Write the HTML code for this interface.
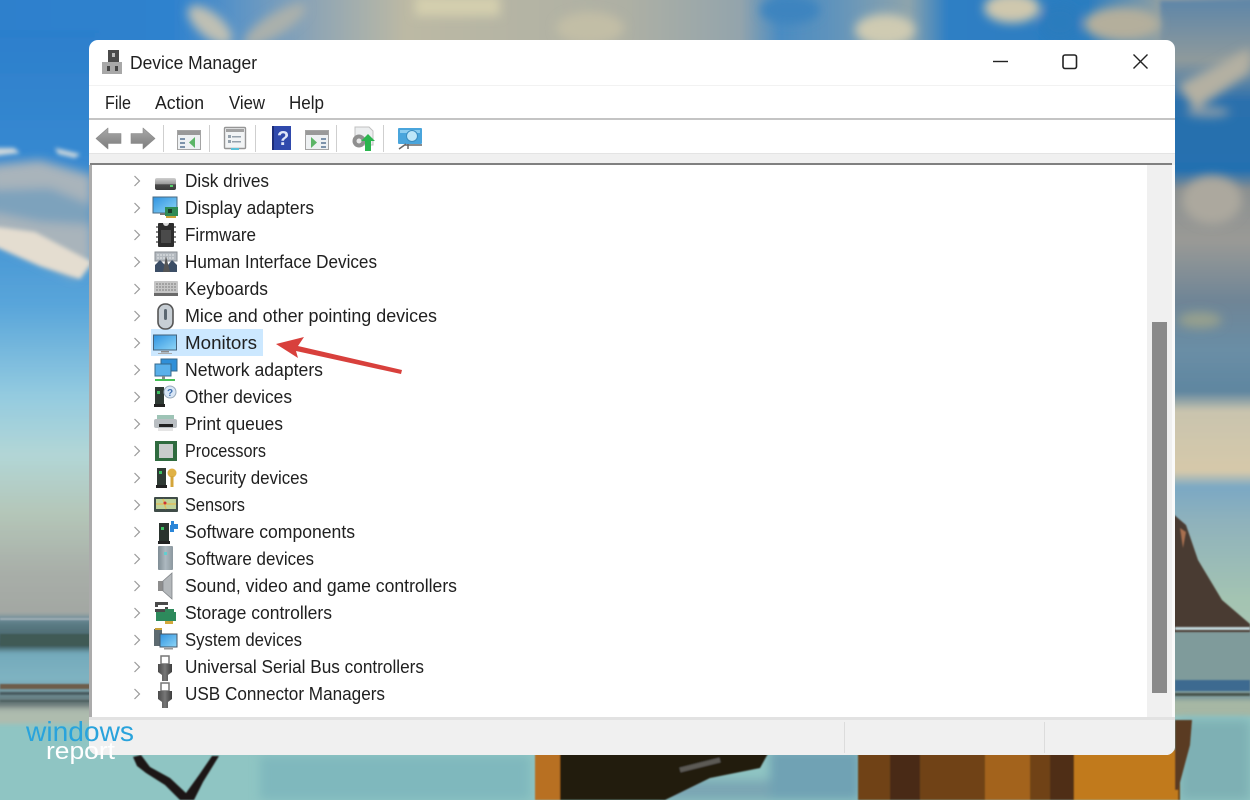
<!DOCTYPE html>
<html><head><meta charset="utf-8"><title>Device Manager</title>
<style>
html,body{margin:0;padding:0;width:1250px;height:800px;overflow:hidden;background:#4a90c8}
svg{display:block;position:absolute;left:0;top:0}
text{font-family:"Liberation Sans",sans-serif;fill:#202020}
</style></head><body>
<svg width="1250" height="800" viewBox="0 0 1250 800" xmlns="http://www.w3.org/2000/svg">
<defs>
<filter id="b2" filterUnits="userSpaceOnUse" x="-20" y="-20" width="1290" height="840"><feGaussianBlur stdDeviation="2"/></filter>
<filter id="b5" filterUnits="userSpaceOnUse" x="-20" y="-20" width="1290" height="840"><feGaussianBlur stdDeviation="5"/></filter>
<filter id="b9" filterUnits="userSpaceOnUse" x="-20" y="-20" width="1290" height="840"><feGaussianBlur stdDeviation="9"/></filter>
<filter id="b1" filterUnits="userSpaceOnUse" x="-20" y="-20" width="1290" height="840"><feGaussianBlur stdDeviation="0.8"/></filter>
<linearGradient id="leftsky" x1="0" y1="0" x2="0" y2="1">
<stop offset="0" stop-color="#2c7fcc"/><stop offset=".28" stop-color="#3a8cd2"/><stop offset=".47" stop-color="#5aa6da"/><stop offset=".62" stop-color="#94cbe0"/><stop offset=".72" stop-color="#b2d6d6"/><stop offset=".82" stop-color="#b4c6b8"/><stop offset=".92" stop-color="#a8aea8"/><stop offset="1" stop-color="#a2a6a2"/>
</linearGradient>
<linearGradient id="rightsky" x1="0" y1="0" x2="0" y2="1">
<stop offset="0" stop-color="#5e86a8"/><stop offset=".095" stop-color="#8f9a9c"/><stop offset=".16" stop-color="#2a6fad"/><stop offset=".27" stop-color="#2470b0"/><stop offset=".3" stop-color="#8a8f90"/><stop offset=".38" stop-color="#9a9a96"/><stop offset=".476" stop-color="#6f8596"/><stop offset=".555" stop-color="#6a8ea6"/><stop offset=".62" stop-color="#5f86a0"/><stop offset=".65" stop-color="#c9c4ae"/><stop offset=".746" stop-color="#d6c9aa"/><stop offset=".77" stop-color="#7ba8c4"/><stop offset=".825" stop-color="#8fb2bc"/><stop offset=".95" stop-color="#a4c4b2"/><stop offset="1" stop-color="#a8c6b4"/>
</linearGradient>
<linearGradient id="seaL" x1="0" y1="0" x2="0" y2="1">
<stop offset="0" stop-color="#7f99a4"/><stop offset=".08" stop-color="#5b7c86"/><stop offset=".3" stop-color="#3f5a5c"/><stop offset=".36" stop-color="#74aabb"/><stop offset=".62" stop-color="#7fb3c2"/><stop offset=".85" stop-color="#5f6f70"/><stop offset=".9" stop-color="#a8b4aa"/><stop offset="1" stop-color="#adbdb0"/>
</linearGradient>
<linearGradient id="topstrip" x1="0" y1="0" x2="1" y2="0">
<stop offset="0" stop-color="#2d80cc"/><stop offset=".15" stop-color="#2f82ce"/><stop offset=".2" stop-color="#5c94c6"/><stop offset=".26" stop-color="#8fa5b4"/><stop offset=".33" stop-color="#bcb9a4"/><stop offset=".5" stop-color="#aeb0a4"/><stop offset=".59" stop-color="#93a4ac"/><stop offset=".62" stop-color="#4b8cc2"/><stop offset=".66" stop-color="#5f93bc"/><stop offset=".72" stop-color="#8ea4ac"/><stop offset=".75" stop-color="#2e7fc4"/><stop offset=".86" stop-color="#2c7dc0"/><stop offset=".92" stop-color="#9aa3a0"/><stop offset="1" stop-color="#6489a8"/>
</linearGradient>
<linearGradient id="dsk" x1="0" y1="0" x2="0" y2="1"><stop offset="0" stop-color="#d0d0d0"/><stop offset=".5" stop-color="#9a9a9a"/><stop offset=".55" stop-color="#4a4a4a"/><stop offset="1" stop-color="#3a3a3a"/></linearGradient>
<linearGradient id="scr" x1="0" y1="0" x2="1" y2="1"><stop offset="0" stop-color="#2f93e0"/><stop offset="1" stop-color="#8fd6f7"/></linearGradient>
<linearGradient id="tower" x1="0" y1="0" x2="1" y2="0"><stop offset="0" stop-color="#7f8c94"/><stop offset=".5" stop-color="#adb9c0"/><stop offset="1" stop-color="#8c989f"/></linearGradient>
<linearGradient id="usb" x1="0" y1="0" x2="1" y2="0"><stop offset="0" stop-color="#4a4a4a"/><stop offset=".5" stop-color="#777"/><stop offset="1" stop-color="#3d3d3d"/></linearGradient>
<linearGradient id="bt" x1="0" y1="0" x2="0" y2="1"><stop offset="0" stop-color="#a9a9a9"/><stop offset="1" stop-color="#7c7c7c"/></linearGradient>
<clipPath id="win"><rect x="89" y="40" width="1086" height="715" rx="9"/></clipPath>
</defs>

<!-- wallpaper base -->
<g filter="url(#b2)">
<rect x="-20" y="-20" width="1290" height="70" fill="url(#topstrip)"/>
<rect x="-20" y="30" width="120" height="590" fill="url(#leftsky)"/>
<rect x="-20" y="615" width="120" height="105" fill="url(#seaL)"/>
<rect x="1160" y="0" width="110" height="632" fill="url(#rightsky)"/>
<rect x="1160" y="626" width="110" height="80" fill="#7f9b9b"/>
<rect x="-20" y="716" width="1300" height="100" fill="#8fc5c3"/>
<rect x="-20" y="712" width="120" height="12" fill="#aebcae"/>
<rect x="1160" y="700" width="110" height="16" fill="#a6b7a4"/>
</g>
<!-- top clouds -->
<g filter="url(#b5)">
<ellipse cx="210" cy="25" rx="27" ry="12" fill="#bfc0b4" transform="rotate(40 210 25)"/>
<ellipse cx="275" cy="25" rx="36" ry="11" fill="#aab0ac" transform="rotate(-32 275 25)"/>
<rect x="415" y="-4" width="85" height="20" fill="#d4cfae"/>
<ellipse cx="590" cy="28" rx="34" ry="16" fill="#c2bea6"/>
<ellipse cx="885" cy="30" rx="30" ry="16" fill="#cfcbb2"/>
<ellipse cx="1012" cy="8" rx="28" ry="15" fill="#cfc8ae"/>
<ellipse cx="1122" cy="24" rx="38" ry="17" fill="#b4af9c"/>
<ellipse cx="790" cy="10" rx="30" ry="14" fill="#3d84bf"/>
<ellipse cx="1060" cy="22" rx="20" ry="18" fill="#2b7bbd"/>
</g>
<!-- left clouds -->
<g filter="url(#b5)">
<path d="M-10 165L40 160L92 175L92 262L75 278L-10 240Z" fill="#a9b4bb"/>
<path d="M-10 190L50 188L92 205L92 225L40 222L-10 212Z" fill="#7da2bc"/>
</g>
<g filter="url(#b2)">
<path d="M-10 226L35 232L92 262L80 279L40 266L-10 244Z" fill="#e4ddd0"/>
<path d="M-5 148L14 148L20 153L-5 156ZM55 148L80 154L75 158L58 154Z" fill="#cfd8dc"/>
</g>
<!-- left sea -->
<g filter="url(#b1)">
<rect x="0" y="634" width="92" height="12" fill="#3f5a54"/>
<rect x="0" y="618" width="92" height="2" fill="#a0b0b8"/>
<rect x="0" y="684" width="92" height="5" fill="#6e5d4c"/>
<rect x="0" y="692" width="92" height="3" fill="#4a5c60"/>
<rect x="0" y="700" width="92" height="2" fill="#50605e"/>
</g>
<!-- right clouds + hill -->
<g filter="url(#b5)">
<path d="M1178 85L1250 48L1250 72L1195 110Z" fill="#b4b0a2"/>
<ellipse cx="1208" cy="112" rx="22" ry="5" fill="#8a9ca8"/>
<ellipse cx="1212" cy="200" rx="30" ry="24" fill="#aca89e"/>
<ellipse cx="1200" cy="320" rx="22" ry="8" fill="#96a08e"/>
</g>
<path d="M1172 513L1186 525L1198 560L1222 600L1250 624L1250 632L1172 632Z" fill="#4a3b30" filter="url(#b1)"/>
<path d="M1180 528L1186 532L1183 548Z" fill="#a87050" filter="url(#b1)"/>
<g filter="url(#b1)">
<rect x="1175" y="627" width="75" height="3" fill="#c0d4d8"/>
<rect x="1175" y="680" width="75" height="11" fill="#3d6a90"/>
<rect x="1175" y="693" width="75" height="3" fill="#4a564f"/>
</g>
<!-- bottom -->
<g filter="url(#b5)">
<rect x="260" y="756" width="270" height="44" fill="#7fb8bd"/>
<rect x="770" y="750" width="90" height="50" fill="#6fa2b4"/>
<rect x="665" y="780" width="105" height="20" fill="#7aa6b4"/>
<rect x="1180" y="720" width="70" height="80" fill="#7eb0b4"/>
</g>
<g filter="url(#b1)">
<rect x="535" y="750" width="32" height="50" fill="#b86f22"/>
<path d="M560 750H770L760 768L710 778L665 800H560Z" fill="#231a10"/>
<path d="M680 770L720 760" stroke="#5c5a54" stroke-width="5"/>
<rect x="858" y="750" width="322" height="50" fill="#6f4216"/>
<rect x="1070" y="750" width="108" height="50" fill="#c17a1a"/>
<rect x="985" y="750" width="45" height="50" fill="#a3641c"/>
<rect x="890" y="750" width="30" height="50" fill="#4a2c14"/>
<rect x="1050" y="750" width="24" height="50" fill="#4f2e12"/>
<path d="M1175 720H1192L1190 745L1178 790H1175Z" fill="#5a3a22"/>
</g>
<path d="M133 757L137 766L146 773L165 785L180 800H194L203 782L219 756L212 756L199 775L186 793L170 778L150 767L141 755Z" fill="#1d1712" filter="url(#b1)"/>

<!-- window -->
<g clip-path="url(#win)">
<rect x="89" y="40" width="1086" height="715" fill="#fff"/>
<rect x="89" y="85" width="1086" height="1" fill="#f2f2f2"/>
<rect x="89" y="118" width="1086" height="2" fill="#c4c4c4"/>
<rect x="89" y="153" width="1086" height="12" fill="#f0f0f0"/>
<rect x="89" y="153" width="1086" height="1" fill="#e4e4e4"/>
<rect x="90" y="163" width="1082" height="2" fill="#808080"/>
<rect x="89" y="165" width="3" height="555" fill="#ababab"/>
<rect x="1147" y="165" width="25" height="552" fill="#f0f0f0"/>
<rect x="1172" y="165" width="3" height="555" fill="#fafafa"/>
<rect x="1152" y="322" width="15" height="371" fill="#8a8a8a"/>
<rect x="89" y="717" width="1086" height="3" fill="#e2e2e2"/>
<rect x="89" y="720" width="1086" height="35" fill="#f0f0f0"/>
<rect x="844" y="722" width="1" height="31" fill="#dcdcdc"/>
<rect x="1044" y="722" width="1" height="31" fill="#dcdcdc"/>
</g>

<!-- title -->
<g>
<rect x="108" y="50" width="11" height="12" fill="#4a4a4a"/><rect x="112" y="53" width="3" height="4" fill="#bbb"/>
<path d="M102 62H122V74H102Z" fill="#a8a8a8"/><rect x="107" y="66" width="3" height="5" fill="#444"/><rect x="115" y="66" width="3" height="5" fill="#444"/>
</g>
<text x="130" y="69" font-size="18" textLength="127" lengthAdjust="spacingAndGlyphs">Device Manager</text>
<text x="105" y="109" font-size="18" textLength="26" lengthAdjust="spacingAndGlyphs">File</text>
<text x="155" y="109" font-size="18" textLength="49" lengthAdjust="spacingAndGlyphs">Action</text>
<text x="229" y="109" font-size="18" textLength="36" lengthAdjust="spacingAndGlyphs">View</text>
<text x="289" y="109" font-size="18" textLength="35" lengthAdjust="spacingAndGlyphs">Help</text>
<!-- window controls -->
<path d="M993 61.5H1008" stroke="#222" stroke-width="1.4"/>
<rect x="1063" y="55" width="13.5" height="13.5" rx="2" fill="none" stroke="#222" stroke-width="1.6"/>
<path d="M1133.5 54.5L1147.5 68.5M1147.5 54.5L1133.5 68.5" stroke="#222" stroke-width="1.4"/>

<!-- toolbar -->
<path d="M96 138.5L108 128V133.500H121V143.500H108V149Z" fill="url(#bt)" stroke="#8a8a8a" stroke-width=".6" stroke-linejoin="round"/>
<path d="M155 138.5L143 128V133.500H131V143.500H143V149Z" fill="url(#bt)" stroke="#8a8a8a" stroke-width=".6" stroke-linejoin="round"/>
<g fill="#cfcfcf"><rect x="163" y="125" width="1" height="27"/><rect x="209" y="125" width="1" height="27"/><rect x="255" y="125" width="1" height="27"/><rect x="336" y="125" width="1" height="27"/><rect x="383" y="125" width="1" height="27"/></g>
<!-- tb1 -->
<rect x="177.500" y="130.500" width="23" height="19" fill="#eef1f3" stroke="#a4a4a4"/><rect x="178" y="131" width="22" height="4" fill="#999"/>
<g fill="#7d93ab"><rect x="180" y="138" width="5" height="2"/><rect x="180" y="142" width="5" height="2"/><rect x="180" y="146" width="5" height="2"/></g>
<path d="M195 137V148L189 142.500Z" fill="#5bb566"/>
<!-- tb2 -->
<rect x="224.500" y="127.500" width="21" height="21" rx="1" fill="#f2f4f5" stroke="#969696" stroke-width="1.400"/><rect x="226" y="129" width="18" height="3" fill="#a2a2a2"/>
<g fill="#95a1ac"><rect x="228" y="135" width="3" height="3"/><rect x="228" y="140" width="3" height="3"/><rect x="232" y="136" width="9" height="1.500"/><rect x="232" y="141" width="9" height="1.500"/></g>
<rect x="231" y="148" width="8" height="2" fill="#59c0d8"/>
<!-- help -->
<rect x="272" y="126" width="19" height="24" fill="#2f49ac"/><rect x="272" y="126" width="2" height="24" fill="#1c2c78"/>
<text x="277" y="145" font-size="20" font-weight="bold" style="fill:#dfe6f8">?</text>
<!-- tb4 -->
<rect x="305.500" y="130.500" width="23" height="19" fill="#eef1f3" stroke="#a4a4a4"/><rect x="306" y="131" width="22" height="4" fill="#999"/>
<path d="M311 137V148L317 142.500Z" fill="#5bb566"/>
<g fill="#7d93ab"><rect x="321" y="138" width="5" height="2"/><rect x="321" y="142" width="5" height="2"/><rect x="321" y="146" width="5" height="2"/></g>
<!-- tb5 -->
<path d="M355 127H369L373 131V145H355Z" fill="#eceeef" stroke="#c0c0c0"/>
<circle cx="359" cy="141" r="6.500" fill="#8f8f8f"/><circle cx="359" cy="141" r="2.500" fill="#e8e8e8"/>
<path d="M368 134L375 141H371V151H365V141H361Z" fill="#2bb54e"/>
<!-- tb6 -->
<rect x="398" y="128" width="24" height="16" rx="1" fill="#4aa5dc"/><rect x="400" y="130" width="20" height="3" fill="#8dcdf0"/>
<circle cx="412" cy="136" r="5.500" fill="#bfe6f8" stroke="#3c8dc0"/>
<path d="M406 144L399 149M405 145H422M408 144V149" stroke="#666" stroke-width="1.500" fill="none"/>

<!-- highlight -->
<rect x="151" y="329" width="112" height="27" fill="#cce8ff"/>

<!-- chevrons -->
<g fill="none" stroke="#999" stroke-width="1.200">
<path d="M134.500 176L139.500 181L134.500 186M134.500 203L139.500 208L134.500 213M134.500 230L139.500 235L134.500 240M134.500 257L139.500 262L134.500 267M134.500 284L139.500 289L134.500 294M134.500 311L139.500 316L134.500 321M134.500 338L139.500 343L134.500 348M134.500 365L139.500 370L134.500 375M134.500 392L139.500 397L134.500 402M134.500 419L139.500 424L134.500 429M134.500 446L139.500 451L134.500 456M134.500 473L139.500 478L134.500 483M134.500 500L139.500 505L134.500 510M134.500 527L139.500 532L134.500 537M134.500 554L139.500 559L134.500 564M134.500 581L139.500 586L134.500 591M134.500 608L139.500 613L134.500 618M134.500 635L139.500 640L134.500 645M134.500 662L139.500 667L134.500 672M134.500 689L139.500 694L134.500 699"/>
</g>

<!-- tree labels -->
<g font-size="18">
<text x="185" y="187" textLength="84" lengthAdjust="spacingAndGlyphs">Disk drives</text>
<text x="185" y="214" textLength="129" lengthAdjust="spacingAndGlyphs">Display adapters</text>
<text x="185" y="241" textLength="71" lengthAdjust="spacingAndGlyphs">Firmware</text>
<text x="185" y="268" textLength="192" lengthAdjust="spacingAndGlyphs">Human Interface Devices</text>
<text x="185" y="295" textLength="83" lengthAdjust="spacingAndGlyphs">Keyboards</text>
<text x="185" y="322" textLength="252" lengthAdjust="spacingAndGlyphs">Mice and other pointing devices</text>
<text x="185" y="349" textLength="72" lengthAdjust="spacingAndGlyphs">Monitors</text>
<text x="185" y="376" textLength="138" lengthAdjust="spacingAndGlyphs">Network adapters</text>
<text x="185" y="403" textLength="107" lengthAdjust="spacingAndGlyphs">Other devices</text>
<text x="185" y="430" textLength="98" lengthAdjust="spacingAndGlyphs">Print queues</text>
<text x="185" y="457" textLength="81" lengthAdjust="spacingAndGlyphs">Processors</text>
<text x="185" y="484" textLength="123" lengthAdjust="spacingAndGlyphs">Security devices</text>
<text x="185" y="511" textLength="60" lengthAdjust="spacingAndGlyphs">Sensors</text>
<text x="185" y="538" textLength="170" lengthAdjust="spacingAndGlyphs">Software components</text>
<text x="185" y="565" textLength="129" lengthAdjust="spacingAndGlyphs">Software devices</text>
<text x="185" y="592" textLength="272" lengthAdjust="spacingAndGlyphs">Sound, video and game controllers</text>
<text x="185" y="619" textLength="147" lengthAdjust="spacingAndGlyphs">Storage controllers</text>
<text x="185" y="646" textLength="117" lengthAdjust="spacingAndGlyphs">System devices</text>
<text x="185" y="673" textLength="239" lengthAdjust="spacingAndGlyphs">Universal Serial Bus controllers</text>
<text x="185" y="700" textLength="200" lengthAdjust="spacingAndGlyphs">USB Connector Managers</text>
</g>

<!-- disk -->
<rect x="155" y="178" width="21" height="12" rx="2" fill="url(#dsk)"/><rect x="170" y="185" width="3" height="2" fill="#55d06a"/>
<!-- display adapters -->
<rect x="153" y="197" width="24" height="16" fill="url(#scr)" stroke="#4a6a80"/><rect x="160" y="213" width="10" height="2" fill="#777"/>
<rect x="165" y="207" width="13" height="9" fill="#2f8b55"/><rect x="168" y="209" width="4" height="4" fill="#1b3d2a"/><rect x="166" y="216" width="10" height="2" fill="#c9a23a"/>
<!-- firmware -->
<rect x="158" y="223" width="16" height="24" rx="1" fill="#2d2d2d"/><path d="M163 223A3 3 0 0 0 169 223Z" fill="#ddd"/><rect x="161" y="230" width="10" height="13" fill="#4a4a4a"/>
<g fill="#888"><rect x="156" y="226" width="2" height="2"/><rect x="156" y="231" width="2" height="2"/><rect x="156" y="236" width="2" height="2"/><rect x="156" y="241" width="2" height="2"/><rect x="174" y="226" width="2" height="2"/><rect x="174" y="231" width="2" height="2"/><rect x="174" y="236" width="2" height="2"/><rect x="174" y="241" width="2" height="2"/></g>
<!-- HID -->
<rect x="155" y="252" width="22" height="9" fill="#b4bac0" stroke="#8a8f94"/>
<path d="M157 255H175M157 258H175" stroke="#e6e8ea" stroke-dasharray="2 1"/>
<path d="M155 272V265L160 260L165 265V272ZM168 272V265L172 260L177 265V272Z" fill="#3c4e66"/>
<path d="M166 256L170 272H163Z" fill="#555"/>
<!-- keyboards -->
<rect x="154" y="281" width="24" height="14" rx="1" fill="#c6c6c6"/><path d="M156 284H176M156 287H176M156 290H176" stroke="#8d8d8d" stroke-width="1.200" stroke-dasharray="2 1"/><rect x="154" y="293" width="24" height="3" fill="#6a6a6a"/>
<!-- mouse -->
<rect x="158" y="304" width="15" height="25" rx="7" fill="#c7ced4" stroke="#555" stroke-width="1.600"/><rect x="164" y="309" width="3" height="11" rx="1.500" fill="#5a6670"/>
<!-- monitor -->
<rect x="153.500" y="335" width="23" height="15" fill="url(#scr)" stroke="#45627a"/><rect x="161" y="351" width="8" height="1.500" fill="#8a8a8a"/><rect x="158" y="353" width="14" height="1" fill="#aaa"/>
<!-- network -->
<rect x="161" y="359" width="16" height="12" fill="#2f8fd8" stroke="#34688c"/><rect x="155" y="364" width="16" height="12" fill="#5ab0ea" stroke="#34688c"/><rect x="162" y="376" width="3" height="3" fill="#888"/><rect x="155" y="379" width="20" height="2" fill="#47c058"/>
<!-- other -->
<rect x="155" y="387" width="9" height="17" fill="#2f3a34"/><rect x="157" y="391" width="3" height="3" fill="#3cc060"/><rect x="154" y="404" width="11" height="3" fill="#222"/>
<circle cx="170" cy="392" r="6" fill="#d8e6f6" stroke="#9ab"/><text x="167" y="396" font-size="10" font-weight="bold" style="fill:#3d6fb0">?</text>
<!-- print -->
<path d="M157 415H174V419H157Z" fill="#9ec4b6"/><rect x="154" y="419" width="23" height="9" rx="2" fill="#b9bec2"/><rect x="159" y="424" width="14" height="3" fill="#222"/><rect x="158" y="428" width="15" height="3" fill="#e5e5e5"/>
<!-- processor -->
<rect x="155" y="441" width="22" height="20" fill="#2f6b3f"/><rect x="159" y="444" width="14" height="14" fill="#c9cccc"/>
<!-- security -->
<rect x="157" y="468" width="9" height="17" fill="#2f3a34"/><rect x="159" y="471" width="3" height="3" fill="#3cc060"/><rect x="156" y="485" width="11" height="3" fill="#222"/>
<circle cx="172" cy="473" r="4.500" fill="#e0b246"/><rect x="170.500" y="476" width="3" height="11" fill="#d4a53a"/>
<!-- sensors -->
<rect x="154" y="497" width="24" height="15" rx="1" fill="#3f4c48"/><rect x="156" y="499" width="20" height="10" fill="#bfd39a"/><path d="M163 499L166 509M156 504H176" stroke="#e0c060" stroke-width="1.500"/><circle cx="165" cy="503" r="1.500" fill="#c33"/>
<!-- software components -->
<rect x="159" y="523" width="10" height="18" fill="#2a332e"/><rect x="161" y="527" width="3" height="3" fill="#3cc060"/><rect x="158" y="541" width="12" height="3" fill="#222"/>
<path d="M171 521H174V524H178V529H174V532H170V525H171Z" fill="#2b86d8"/>
<!-- software devices -->
<rect x="158" y="546" width="15" height="24" rx="1" fill="url(#tower)"/><rect x="164" y="552" width="3" height="3" fill="#62cfd0"/>
<!-- sound -->
<rect x="158" y="581" width="5" height="10" fill="#8d8d8d"/><path d="M163 581L172 573V599L163 591Z" fill="#b4b8bb" stroke="#7e8286" stroke-width=".8"/>
<!-- storage -->
<path d="M155 602H168V605H158V607H168V612H155V609H165V607H155Z" fill="#4a4a4a"/><rect x="156" y="612" width="20" height="9" fill="#2d8a5c"/><rect x="165" y="609" width="9" height="5" fill="#2f8a5c"/><rect x="165" y="621" width="8" height="3" fill="#d3a93c"/>
<!-- system -->
<rect x="154" y="629" width="8" height="17" fill="#5d6a70"/><rect x="160" y="634" width="17" height="13" fill="url(#scr)" stroke="#456"/><rect x="164" y="648" width="9" height="1.500" fill="#999"/><rect x="155" y="628" width="7" height="2" fill="#c9a23a"/>
<!-- usb -->
<path d="M161 656H169V664H161Z" fill="none" stroke="#777" stroke-width="1.500"/><path d="M158 664H172V672L168 675V681H162V675L158 672Z" fill="url(#usb)"/>
<path d="M161 683H169V691H161Z" fill="none" stroke="#777" stroke-width="1.500"/><path d="M158 691H172V699L168 702V708H162V702L158 699Z" fill="url(#usb)"/>

<!-- arrow -->
<path d="M276 344L304 337L298 346L402 370L401 374L296 351L298 358Z" fill="#d8403c"/>

<!-- watermark -->
<text x="26" y="741" font-size="28" textLength="108" lengthAdjust="spacingAndGlyphs" style="fill:#29a3dc">windows</text>
<text x="46" y="759" font-size="24" textLength="69" lengthAdjust="spacingAndGlyphs" style="fill:#fff">report</text>
</svg>
</body></html>
